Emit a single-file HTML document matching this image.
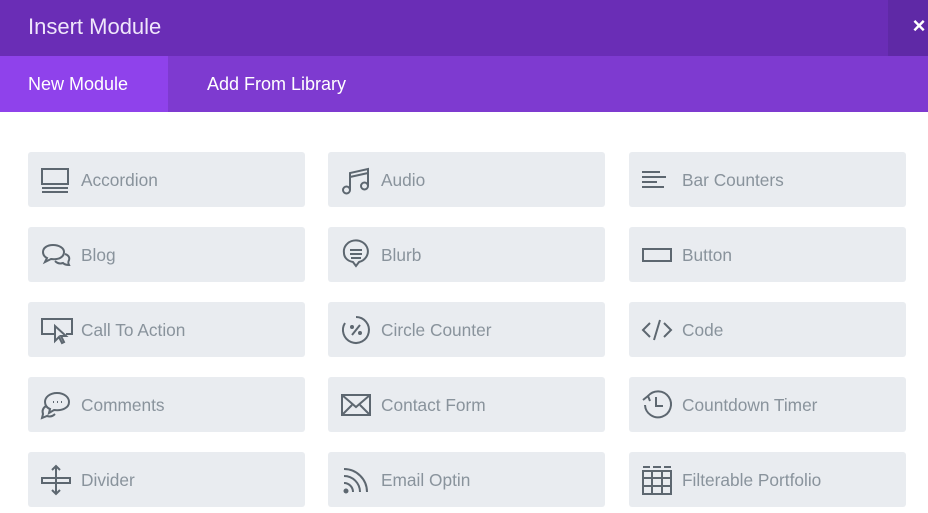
<!DOCTYPE html>
<html><head><meta charset="utf-8"><style>
*{margin:0;padding:0;box-sizing:border-box}
body{width:928px;height:513px;overflow:hidden;background:#fff;font-family:"Liberation Sans",sans-serif;position:relative}
.hdr{position:absolute;left:0;top:0;width:928px;height:56px;background:#6a2db6}
.hdr .t{position:absolute;left:28px;top:14px;color:#efe6fb;font-size:22px}
.close{position:absolute;right:0;top:0;width:40px;height:56px;background:#5f29a6;color:#fff;font-size:22px;font-weight:bold;text-align:center;line-height:52px;padding-left:22px}
.tabs{position:absolute;left:0;top:56px;width:928px;height:56px;background:#7e3ad0}
.tab{position:absolute;top:0;height:56px;line-height:57px;color:#fff;font-size:18px}
.tab.a{left:0;width:168px;background:#8f42eb;padding-left:28px}
.card{position:absolute;width:277px;height:55px;background:#e9ecf0;border-radius:3px}
.card svg{position:absolute;left:11px;top:11px;width:34px;height:34px;fill:none;stroke:#5d6770;stroke-width:2}
.card span{position:absolute;left:53px;top:18px;font-size:17.3px;color:#89939c}
</style></head><body>
<div class="hdr"><div class="t">Insert Module</div><div class="close">×</div></div>
<div class="tabs"><div class="tab a">New Module</div><div class="tab" style="left:207px">Add From Library</div></div>

<div class="card" style="left:28px;top:152px"><svg viewBox="0 0 34 34"><rect x="3" y="6" width="26" height="15"/><path d="M3 25h26M3 29h26"/></svg><span>Accordion</span></div>
<div class="card" style="left:328px;top:152px"><svg viewBox="0 0 34 34"><path d="M11 27V10l18-4v17M11 14l18-4"/><circle cx="7.5" cy="27" r="3.5"/><circle cx="25.5" cy="23" r="3.5"/></svg><span>Audio</span></div>
<div class="card" style="left:629px;top:152px"><svg viewBox="0 0 34 34"><path d="M2 9h18M2 14h24M2 19h15M2 24h22"/></svg><span>Bar Counters</span></div>

<div class="card" style="left:28px;top:227px"><svg viewBox="0 0 34 34"><path d="M14 7c-6 0-10 3-10 7 0 3 2 5 4 6l-2 4 6-3c8 1 13-2 13-7 0-4-5-7-11-7z"/><path d="M26 16c3 1 5 3 4 6-1 2-1 3 0 5-3 0-5-1-6-2-3 1-6 0-8-2" /></svg><span>Blog</span></div>
<div class="card" style="left:328px;top:227px"><svg viewBox="0 0 34 34"><path d="M17 28l-3-4C8 23 5 19 5 15a12 11 0 1 1 15 9z"/><path d="M11 12h12M11 16h12M12 20h10"/></svg><span>Blurb</span></div>
<div class="card" style="left:629px;top:227px"><svg viewBox="0 0 34 34"><rect x="3" y="11" width="28" height="12"/></svg><span>Button</span></div>

<div class="card" style="left:28px;top:302px"><svg viewBox="0 0 34 34"><path d="M17 21H3V6h30v15h-6"/><path d="M16 13l0 15 4-4 3 6 2-1-3-6 5 0z"/></svg><span>Call To Action</span></div>
<div class="card" style="left:328px;top:302px"><svg viewBox="0 0 34 34"><path d="M17 4a13 13 0 1 1-11 6"/><path d="M21 12l-8 10"/><circle cx="13" cy="14" r="1" fill="#5d6770"/><circle cx="21" cy="20" r="1" fill="#5d6770"/></svg><span>Circle Counter</span></div>
<div class="card" style="left:629px;top:302px"><svg viewBox="0 0 34 34"><path d="M10 10l-7 7 7 7M24 10l7 7-7 7M20 7l-6 20"/></svg><span>Code</span></div>

<div class="card" style="left:28px;top:377px"><svg viewBox="0 0 34 34"><path d="M18 5c-7 0-12 4-12 9 0 3 2 6 5 7l-1 4 5-3c8 1 15-2 15-8 0-5-5-9-12-9z"/><path d="M7 18c-3 2-4 5-3 8l-1 4 5-2c3 1 6 0 8-2"/><path d="M14 14h1M18 14h1M22 14h1"/></svg><span>Comments</span></div>
<div class="card" style="left:328px;top:377px"><svg viewBox="0 0 34 34"><rect x="3" y="7" width="28" height="20"/><path d="M3 7l14 12L31 7M3 27l10-10M31 27L21 17"/></svg><span>Contact Form</span></div>
<div class="card" style="left:629px;top:377px"><svg viewBox="0 0 34 34"><path d="M8 8a13 13 0 1 1-3 9"/><path d="M3 12l5-4 2 5"/><path d="M16 9v9h7"/></svg><span>Countdown Timer</span></div>

<div class="card" style="left:28px;top:452px"><svg viewBox="0 0 34 34"><rect x="3" y="15" width="28" height="5"/><path d="M17 3v28M13 7l4-4 4 4M13 27l4 4 4-4"/></svg><span>Divider</span></div>
<div class="card" style="left:328px;top:452px"><svg viewBox="0 0 34 34"><circle cx="7" cy="28" r="1.5" fill="#5d6770"/><path d="M5 20a9 9 0 0 1 9 9M5 13a16 16 0 0 1 16 16M5 6a23 23 0 0 1 23 23"/></svg><span>Email Optin</span></div>
<div class="card" style="left:629px;top:452px"><svg viewBox="0 0 34 34"><path d="M3 4h7M13 4h8M24 4h7"/><rect x="3" y="8" width="28" height="23"/><path d="M3 15h28M3 23h28M12 8v23M22 8v23"/></svg><span>Filterable Portfolio</span></div>
</body></html>
